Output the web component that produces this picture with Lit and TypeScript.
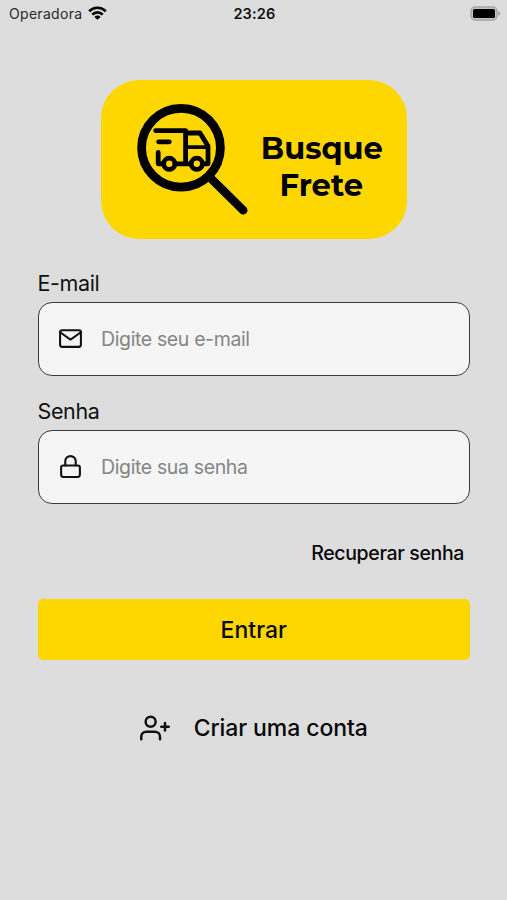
import { LitElement, html, css, svg } from "lit";
import { customElement, property } from "lit/decorators.js";

const mailIcon = svg`<rect x="2" y="4" width="20" height="16" rx="2"/><path d="M22 6l-10 7L2 6"/>`;
const lockIcon = svg`<rect x="3" y="11" width="18" height="11" rx="2"/><path d="M7 11V7a5 5 0 0 1 10 0v4"/>`;

@customElement("status-bar")
export class StatusBar extends LitElement {
  static styles = css`
    :host {
      display: grid;
      grid-template-columns: 1fr auto 1fr;
      align-items: center;
      height: 27px;
      padding: 0 6px 0 9px;
      font-size: 14px;
      color: #111;
    }
    .carrier { display: flex; align-items: center; gap: 6px; color: #2a2a2a; }
    .name { letter-spacing: 0.3px; }
    .time { margin-right: 1px; font-weight: 600; font-size: 14.5px; letter-spacing: 0.2px; }
    .battery { justify-self: end; display: block; }
    svg { display: block; margin-top: -1px; }
  `;
  render() {
    return html`
      <div class="carrier">
        <span class="name">Operadora</span>
        <svg width="19" height="14" viewBox="0 0 19 14" fill="none" stroke="#000" stroke-width="2.7">
          <path d="M1.2 5.2a11.7 11.7 0 0 1 16.6 0M4.3 8.6a7.4 7.4 0 0 1 10.4 0"/>
          <path d="M9.5 13.8L6.4 10.9a4.4 4.4 0 0 1 6.2 0z" fill="#000" stroke="none"/>
        </svg>
      </div>
      <span class="time">23:26</span>
      <svg class="battery" width="31" height="15" viewBox="0 0 31 15">
        <rect x="1" y="1" width="26" height="13" rx="4" fill="#c4c4c4" stroke="#a4a4a4" stroke-width="1.4"/>
        <rect x="3" y="3" width="22" height="9" rx="1.5" fill="#000"/>
        <path d="M28.3 5.2q2.2 1 2.2 2.3t-2.2 2.3z" fill="#9c9c9c"/>
      </svg>
    `;
  }
}

@customElement("brand-logo")
export class BrandLogo extends LitElement {
  static styles = css`
    :host {
      display: flex;
      width: 306px;
      height: 159px;
      border-radius: 38px;
      background: #ffd700;
      overflow: hidden;
    }
    .mark { flex: none; display: block; }
    .name {
      width: 121px;
      margin: 49.5px 0 0 9px;
      text-align: center;
      font: 700 30.6px/37px Montserrat, Inter, sans-serif;
      color: #000;
      white-space: nowrap;
    }
    .line { display: block; }
  `;
  render() {
    return html`
      <svg class="mark" width="151" height="159" viewBox="101 80 151 159" fill="none" stroke="#000" stroke-linecap="round" stroke-linejoin="round">
        <circle cx="181" cy="147.7" r="39.4" stroke-width="8.8"/>
        <path d="M210.5 178L243.2 210.2" stroke-width="8.6"/>
        <g stroke-width="4.8">
          <path d="M155.6 130.6H185.6V163.8M158.6 141.8H169.3"/>
          <path d="M158.2 152.4V163.8H163M175.5 163.8H190.5M203 163.8H208V146L200 133H185.6"/>
          <path d="M185.6 147.2H207" stroke-width="3.8"/>
          <circle cx="169.3" cy="163.8" r="5.6"/>
          <circle cx="196.8" cy="163.8" r="5.6"/>
        </g>
      </svg>
      <div class="name"><span class="line">Busque</span><span class="line">Frete</span></div>
    `;
  }
}

@customElement("text-field")
export class TextField extends LitElement {
  @property() label = "";
  @property() type = "text";
  @property() placeholder = "";
  @property({ attribute: false }) icon: unknown = null;

  static styles = css`
    :host { display: block; }
    .label { display: block; font-size: 21.5px; line-height: 28px; letter-spacing: -0.38px; color: #111; }
    .box {
      display: flex;
      align-items: center;
      box-sizing: border-box;
      height: 74px;
      margin-top: 5px;
      padding: 0 20px 0 19.5px;
      border: 1.5px solid #3a3a3c;
      border-radius: 14px;
      background: #f5f5f5;
    }
    .icon { flex: none; width: 25px; height: 25px; margin-top: -1px; }
    .input {
      flex: 1;
      min-width: 0;
      margin: 0 0 0 18px;
      padding: 0;
      border: 0;
      outline: 0;
      background: none;
      font: 400 19.5px/28px Inter, sans-serif;
      letter-spacing: -0.37px;
      color: #111;
    }
    .input::placeholder { color: #858585; opacity: 1; }
  `;
  render() {
    return html`
      <label class="label" for="field">${this.label}</label>
      <div class="box">
        <svg class="icon" viewBox="0 0 24 24" fill="none" stroke="#111" stroke-width="2" stroke-linecap="round" stroke-linejoin="round">${this.icon}</svg>
        <input class="input" id="field" type=${this.type} placeholder=${this.placeholder} />
      </div>
    `;
  }
}

@customElement("app-root")
export class AppRoot extends LitElement {
  static styles = css`
    :host {
      display: flex;
      flex-direction: column;
      box-sizing: border-box;
      height: 100vh;
      background: #dddddd;
      font-family: Inter, sans-serif;
      color: #111;
      overflow: hidden;
    }
    .form { display: flex; flex-direction: column; padding: 53px 37px 0 37.5px; }
    .logo { align-self: center; }
    .email { margin-top: 30px; }
    .password { margin-top: 21px; }
    .recover { align-self: flex-end; margin: 35px 6px 0 0; font-size: 19.5px; font-weight: 500; line-height: 28px; letter-spacing: -0.35px; }
    .plain { padding: 0; border: 0; background: none; font-family: inherit; color: #080808; }
    .submit {
      height: 61px;
      margin-top: 32px;
      padding: 0;
      border: 0;
      border-radius: 5px;
      background: #ffd700;
      font: 500 23px/30px Inter, sans-serif;
      color: #080808;
    }
    .create {
      display: flex;
      align-items: center;
      align-self: center;
      gap: 24px;
      margin-top: 53px;
      font-size: 23px;
      font-weight: 500;
      line-height: 30px;
      letter-spacing: -0.08px;
    }
  `;
  render() {
    return html`
      <status-bar></status-bar>
      <main class="form">
        <brand-logo class="logo"></brand-logo>
        <text-field class="email" label="E-mail" placeholder="Digite seu e-mail" .icon=${mailIcon}></text-field>
        <text-field class="password" label="Senha" type="password" placeholder="Digite sua senha" .icon=${lockIcon}></text-field>
        <button class="plain recover">Recuperar senha</button>
        <button class="submit">Entrar</button>
        <button class="plain create">
          <svg width="30" height="30" viewBox="0 0 24 24" fill="none" stroke="#111" stroke-width="2" stroke-linecap="round" stroke-linejoin="round">
            <path d="M16 21v-2a4 4 0 0 0-4-4H5a4 4 0 0 0-4 4v2"/>
            <circle cx="8.5" cy="7" r="4"/>
            <path d="M20 8v6M23 11h-6"/>
          </svg>
          <span>Criar uma conta</span>
        </button>
      </main>
    `;
  }
}
